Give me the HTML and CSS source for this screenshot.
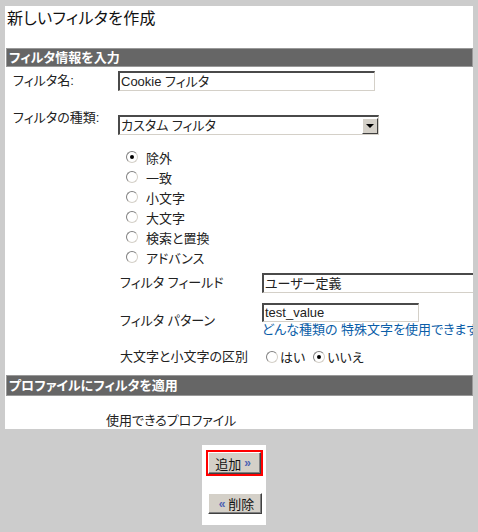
FILE: index.html
```html
<!DOCTYPE html>
<html lang="ja">
<head>
<meta charset="utf-8">
<title>新しいフィルタを作成</title>
<link rel="stylesheet" href="styles.css">
</head>
<body>
<div class="panel">
  <h1 class="title">新しいフィルタを作成</h1>
  <div class="bar">フィルタ情報を入力</div>

  <div class="row row-name">
    <div class="label">フィルタ名:</div>
    <div class="input input-name">Cookie フィルタ</div>
  </div>

  <div class="row row-kind">
    <div class="label">フィルタの種類:</div>
    <div class="select">
      <span class="select-text">カスタム フィルタ</span>
      <span class="select-btn"><span class="arrow"></span></span>
    </div>
  </div>

  <ul class="radios">
    <li><span class="radio checked"></span>除外</li>
    <li><span class="radio"></span>一致</li>
    <li><span class="radio"></span>小文字</li>
    <li><span class="radio"></span>大文字</li>
    <li><span class="radio"></span>検索と置換</li>
    <li><span class="radio"></span>アドバンス</li>
  </ul>

  <div class="sub">
    <div class="sub-row sub-field">
      <div class="sub-label">フィルタ フィールド</div>
      <div class="input input-field">ユーザー定義</div>
    </div>
    <div class="sub-row sub-pattern">
      <div class="sub-label">フィルタ パターン</div>
      <div class="sub-right">
        <div class="input input-pattern">test_value</div>
        <div class="link">どんな種類の 特殊文字を使用できますか</div>
      </div>
    </div>
    <div class="sub-row sub-case">
      <div class="sub-label">大文字と小文字の区別</div>
      <div class="case-opts">
        <span class="radio"></span><span class="opt">はい</span>
        <span class="radio checked"></span><span class="opt">いいえ</span>
      </div>
    </div>
  </div>

  <div class="bar bar2">プロファイルにフィルタを適用</div>
  <div class="profiles">使用できるプロファイル</div>
</div>

<div class="btnbox">
  <div class="focus"><div class="btn btn-add">追加 <span class="chev">»</span></div></div>
  <div class="btn btn-del"><span class="chev">«</span> 削除</div>
</div>
</body>
</html>
```

FILE: styles.css
```css
html, body {
  margin: 0;
  padding: 0;
}
body {
  background: #cccccc;
  font-family: "Liberation Sans", "Noto Sans CJK JP", sans-serif;
  font-size: 13px;
  color: #222;
  font-feature-settings: "palt";
  width: 478px;
  height: 532px;
  overflow: hidden;
}
.panel {
  margin: 6px 5px 0 5px;
  width: 468px;
  height: 423px;
  background: #fff;
  overflow: hidden;
}
.title {
  margin: 0 0 19px 0;
  padding: 3px 0 0 2px;
  font-size: 16px;
  font-weight: normal;
  line-height: 20px;
  letter-spacing: 0.3px;
  color: #111;
}
.bar {
  margin-left: 1px;
  height: 17px;
  border: 1px solid #999;
  background: #666;
  color: #fff;
  font-weight: bold;
  line-height: 17px;
  padding-left: 2px;
  white-space: nowrap;
}
.bar2 {
  margin-top: 12px;
  height: 19px;
  line-height: 19px;
}
.row {
  display: grid;
  grid-template-columns: 113px auto;
  justify-content: start;
}
.label {
  padding-left: 8px;
  line-height: 14px;
  white-space: nowrap;
}
.row-name {
  margin-top: 4px;
  align-items: center;
}
.row-kind {
  margin-top: 20px;
  align-items: start;
}
.input {
  box-sizing: border-box;
  height: 20px;
  border-top: 2px solid #4a4a4a;
  border-left: 2px solid #4a4a4a;
  border-right: 1px solid #d4d0c8;
  border-bottom: 1px solid #d4d0c8;
  background: #fff;
  padding-left: 1px;
  line-height: 17px;
  white-space: nowrap;
}
.input-name { width: 257px; }
.select {
  margin-top: 4px;
  box-sizing: border-box;
  width: 261px;
  height: 20px;
  border-top: 2px solid #4a4a4a;
  border-left: 2px solid #4a4a4a;
  border-right: 1px solid #d4d0c8;
  border-bottom: 1px solid #d4d0c8;
  display: flex;
  align-items: center;
  justify-content: space-between;
}
.select-text {
  padding-left: 1px;
  line-height: 17px;
}
.select-btn {
  box-sizing: border-box;
  width: 16px;
  height: 16px;
  background: #d4d0c8;
  border-top: 1px solid #fff;
  border-left: 1px solid #fff;
  border-right: 1px solid #404040;
  border-bottom: 1px solid #404040;
  display: flex;
  align-items: center;
  justify-content: center;
}
.arrow {
  width: 0;
  height: 0;
  border-left: 4px solid transparent;
  border-right: 4px solid transparent;
  border-top: 4px solid #000;
}
.radios {
  list-style: none;
  margin: 12px 0 0 0;
  padding: 0 0 0 121px;
}
.radios li {
  height: 20px;
  display: flex;
  align-items: center;
  white-space: nowrap;
}
.radios .radio {
  margin-right: 8px;
}
.radio {
  box-sizing: border-box;
  display: inline-block;
  width: 12px;
  height: 12px;
  border-radius: 50%;
  border: 1px solid;
  border-color: #808080 #d4d0c8 #d4d0c8 #808080;
  background: #fff;
  position: relative;
  flex: none;
}
.radio.checked::after {
  content: "";
  position: absolute;
  left: 3px;
  top: 3px;
  width: 4px;
  height: 4px;
  border-radius: 50%;
  background: #000;
}
.sub {
  margin-top: 6px;
  padding-left: 115px;
}
.sub-row {
  display: grid;
  grid-template-columns: 142px auto;
  align-items: center;
}
.sub-label {
  white-space: nowrap;
  line-height: 16px;
}
.input-field { width: 220px; }
.sub-pattern { margin-top: 10px; }
.input-pattern {
  width: 157px;
  height: 19px;
  line-height: 16px;
}
.link {
  color: #0b5ea8;
  line-height: 16px;
  white-space: nowrap;
}
.sub-case {
  margin-top: 9px;
  height: 16px;
}
.case-opts {
  display: flex;
  align-items: center;
  padding-left: 4px;
  white-space: nowrap;
}
.case-opts .opt {
  margin-left: 2px;
  margin-right: 8px;
}
.profiles {
  margin-top: 17px;
  padding-left: 101px;
  line-height: 16px;
}
.btnbox {
  margin: 16px 0 0 202px;
  width: 64px;
  height: 80px;
  background: #fff;
  padding-top: 5px;
  box-sizing: border-box;
}
.focus {
  margin-left: 4px;
  width: 57px;
  height: 26px;
  box-sizing: border-box;
  border: 2px solid #ff0000;
}
.btn {
  box-sizing: border-box;
  background: #d4d0c8;
  border: 1px solid;
  border-color: #fff #404040 #404040 #fff;
  box-shadow: inset -1px -1px #808080;
  display: flex;
  align-items: center;
  justify-content: center;
  white-space: nowrap;
  color: #111;
}
.btn-add {
  width: 53px;
  height: 22px;
}
.btn-del {
  margin: 17px 0 0 6px;
  width: 54px;
  height: 21px;
}
.chev {
  color: #4d63b3;
  font-size: 12px;
  font-weight: bold;
  margin: 0 3px;
}
```
